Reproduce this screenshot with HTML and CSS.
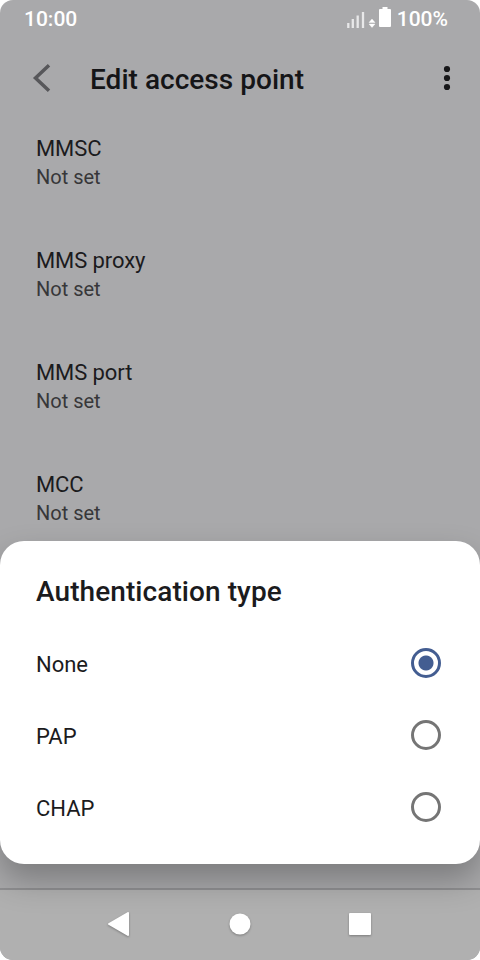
FILE: index.html
```html
<!DOCTYPE html>
<html lang="en">
<head>
<meta charset="utf-8">
<title>Edit access point</title>
<link rel="stylesheet" href="styles.css">
</head>
<body>
<div class="phone">
  <header class="status">
    <span class="clock">10:00</span>
    <svg class="status-icons" width="46" height="24" viewBox="0 0 46 24">
      <path d="M1.300 16v5M5.800 12v9M10.700 8.500V21M16 5v16" stroke="#e8e8e9" stroke-width="2.300"/>
      <path d="M22 15.500l3-3.500 3 3.500zM22 17h6l-3 3.500z" fill="#fff" stroke="#fff" stroke-width=".4"/>
      <path d="M35.500 0h5v2H43a1 1 0 0 1 1 1v16a1 1 0 0 1-1 1H33a1 1 0 0 1-1-1V3a1 1 0 0 1 1-1h2.500z" fill="#fff"/>
    </svg>
    <span class="percent">100%</span>
  </header>
  <div class="toolbar">
    <svg class="back" width="20" height="32" viewBox="0 0 20 32"><path d="M17 3.200L3.500 16 17 28.800" fill="none" stroke="#57575a" stroke-width="3.500"/></svg>
    <h1 class="title">Edit access point</h1>
    <svg class="more" width="8" height="26" viewBox="0 0 8 26"><circle cx="4" cy="4" r="3.100"/><circle cx="4" cy="13" r="3.100"/><circle cx="4" cy="22" r="3.100"/></svg>
  </div>
  <main class="settings">
    <div class="setting"><div class="name">MMSC</div><div class="value">Not set</div></div>
    <div class="setting"><div class="name">MMS proxy</div><div class="value">Not set</div></div>
    <div class="setting"><div class="name">MMS port</div><div class="value">Not set</div></div>
    <div class="setting"><div class="name">MCC</div><div class="value">Not set</div></div>
  </main>
  <nav class="navbar">
    <svg class="nav-icons" width="480" height="70" viewBox="0 0 480 70"><path d="M109 34l19-11v22z"/><circle cx="240" cy="34" r="10.500"/><rect x="350" y="24" width="20" height="20"/></svg>
  </nav>
  <section class="dialog">
    <h2 class="dialog-title">Authentication type</h2>
    <div class="option"><span class="label">None</span><span class="radio checked"></span></div>
    <div class="option"><span class="label">PAP</span><span class="radio"></span></div>
    <div class="option"><span class="label">CHAP</span><span class="radio"></span></div>
  </section>
</div>
</body>
</html>
```
FILE: styles.css
```css
* { box-sizing: border-box; }
body { margin: 0; font-family: Roboto, sans-serif; color: #1b1b1d; background: #fff; }
.phone { position: relative; width: 480px; height: 960px; display: flex; flex-direction: column; background: #a9a9ab; border-radius: 13px; overflow: hidden; }
.status { height: 38px; display: flex; align-items: center; padding: 0 32px 0 24px; color: #fff; font-size: 21px; font-weight: 500; }
.status-icons { margin-left: auto; overflow: visible; }
.percent { margin-left: 4px; }
.toolbar { height: 80px; display: flex; align-items: center; padding: 0 29px 0 32px; }
.more { fill: #171719; }
.title { margin: 0 auto 0 38px; padding-top: 2px; font-size: 28px; letter-spacing: .03px; font-weight: 500; color: #151517; }
.settings { flex: 1; padding: 4px 36px 0; }
.setting { height: 112px; padding-top: 12px; }
.name { font-size: 22px; line-height: 30px; letter-spacing: -.1px; }
.value { font-size: 20px; line-height: 26px; color: #373739; }
.navbar { height: 72px; border-top: 2px solid #8f8f91; background: #b0b0b0; }
.nav-icons { display: block; fill: #fff; stroke: #fff; stroke-width: 2px; stroke-linejoin: round; filter: drop-shadow(0 1px 1px rgba(0,0,0,.3)); }
.nav-icons circle { stroke: none; }
.dialog { position: absolute; left: 0; top: 541px; width: 480px; height: 323px; padding: 26px 39px 0 36px; border-radius: 24px; background: #fff; box-shadow: 0 16px 32px rgba(0,0,0,.27); }
.dialog-title { margin: 0 0 24px; font-size: 28px; line-height: 50px; height: 36px; letter-spacing: .08px; font-weight: 500; }
.option { height: 72px; display: flex; align-items: center; justify-content: space-between; font-size: 22px; letter-spacing: -.03px; }
.label { padding-top: 2px; }
.radio { width: 30px; height: 30px; border: 3px solid #757575; border-radius: 50%; }
.checked { border-color: #435d91; background: radial-gradient(circle, #435d91 7px, transparent 8px); }
```
